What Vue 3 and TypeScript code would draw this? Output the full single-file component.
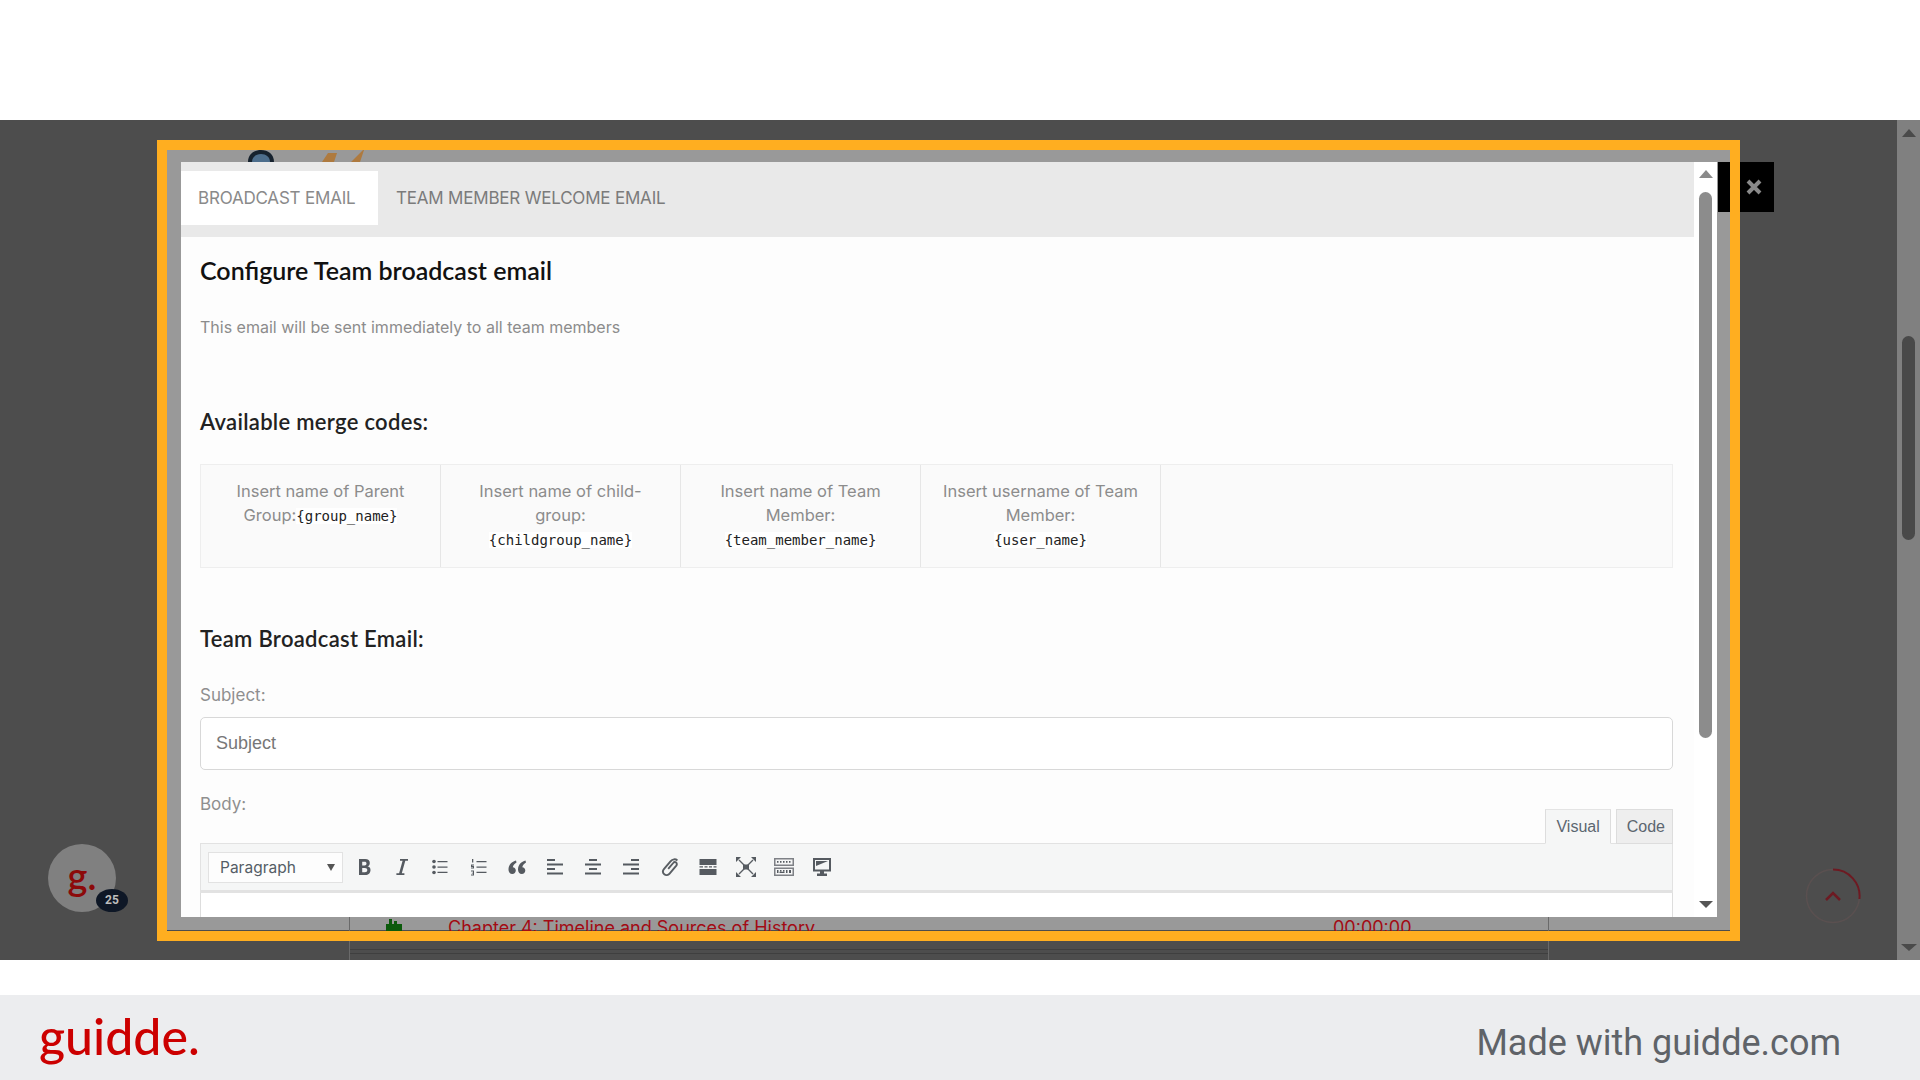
<script setup lang="ts">
const cells = [
  { label: 'Insert name of Parent Group:', code: '{group_name}', inline: true },
  { label: 'Insert name of child-group:', code: '{childgroup_name}', inline: false },
  { label: 'Insert name of Team Member:', code: '{team_member_name}', inline: false },
  { label: 'Insert username of Team Member:', code: '{user_name}', inline: false },
]
</script>

<template>
  <div class="page">
    <div class="top-space"></div>
    <main class="stage">
      <div class="outer-scroll">
        <span class="arrow up dark"></span>
        <span class="outer-thumb"></span>
        <span class="arrow down dark"></span>
      </div>

      <div class="back-rows">
        <div class="back-row">
          <svg class="lock" width="18" height="16" viewBox="0 0 18 16"><path fill="#0b5a0b" d="M4 0h3v5h2V2h3v3h5v11H1V5h3z"/></svg>
          <span class="chapter">Chapter 4: Timeline and Sources of History</span>
          <span class="time">00:00:00</span>
        </div>
        <div class="back-line"></div>
        <div class="back-line second"></div>
      </div>

      <div class="avatar">
        <span class="avatar-g">g.</span>
        <span class="badge">25</span>
      </div>

      <svg class="to-top" width="56" height="56" viewBox="0 0 56 56">
        <circle cx="28" cy="28" r="26.5" fill="none" stroke="#5a5050" stroke-width="1.5"/>
        <path d="M28 1.5A26.5 26.5 0 0 1 54.4 31" fill="none" stroke="#6d1a22" stroke-width="2"/>
        <path d="M21 32l7-7 7 7" fill="none" stroke="#6d1a22" stroke-width="2.5"/>
      </svg>

      <div class="frame-fill">
        <svg class="behind-logo" width="130" height="12" viewBox="0 0 130 12">
          <path fill="#16222e" d="M1 12C1 4 7 0 14 0s13 4 13 12z"/>
          <path fill="#4d6e8c" d="M5 12c0-5 4-8 9-8s9 3 9 8z"/>
          <path fill="#ae7a3f" d="M75 12l6-9h9l-3 9zM104 12l12-12h1l-4 12z"/>
        </svg>
      </div>

      <button class="close" type="button" aria-label="Close">
        <svg width="16" height="16" viewBox="0 0 16 16"><path d="M2 2l12 12M14 2L2 14" stroke="#8a8a8a" stroke-width="4"/></svg>
      </button>

      <section class="modal">
        <div class="modal-main">
          <nav class="tabs">
            <span class="tab active">BROADCAST EMAIL</span>
            <span class="tab">TEAM MEMBER WELCOME EMAIL</span>
          </nav>
          <div class="content">
            <h2 class="title">Configure Team broadcast email</h2>
            <p class="desc">This email will be sent immediately to all team members</p>
            <h3 class="heading merge">Available merge codes:</h3>
            <div class="codes">
              <div v-for="c in cells" :key="c.code" class="cell">
                {{ c.label }}<br v-if="!c.inline" /><code>{{ c.code }}</code>
              </div>
            </div>
            <h3 class="heading team">Team Broadcast Email:</h3>
            <label class="field-label subject-label">Subject:</label>
            <div class="input">Subject</div>
            <div class="body-row">
              <label class="field-label">Body:</label>
              <div class="editor-tabs">
                <span class="etab on">Visual</span>
                <span class="etab">Code</span>
              </div>
            </div>
            <div class="toolbar">
              <div class="select"><span>Paragraph</span><i class="caret"></i></div>
              <span class="btn"><svg viewBox="0 0 20 20"><path fill-rule="evenodd" d="M5 2h6.2c3 0 4.6 1.4 4.6 3.9 0 1.7-.9 2.9-2.3 3.4 1.9.4 3 1.7 3 3.7 0 3-2.100 5-5.200 5H5zm3.200 2.700v3.700h2.300c1.300 0 2-.7 2-1.900s-.7-1.800-2-1.800zm0 6.200v4.400h2.700c1.500 0 2.400-.8 2.400-2.200s-.9-2.200-2.400-2.200z"/></svg></span>
              <span class="btn"><svg viewBox="0 0 20 20"><path d="M8 2h8v1.800h-2.700L9.800 16.200h2.600V18h-8v-1.800h2.700L10.600 3.800H8z"/></svg></span>
              <span class="btn"><svg viewBox="0 0 20 20"><circle cx="4" cy="4.500" r="1.800"/><circle cx="4" cy="10" r="1.800"/><circle cx="4" cy="15.500" r="1.800"/><path d="M7.500 4h10v1.300h-10zM7.500 9.400h10v1.300h-10zM7.500 14.800h10v1.300h-10z"/></svg></span>
              <span class="btn"><svg viewBox="0 0 20 20"><path d="M3 2h1.300v3.500H3zM2 7.500h3v1H3.200v.6H5v2.400H2v-1h2v-.5H2zM2 13.500h3v5H2v-1h2v-1H2.800v-.8H4v-1.200H2zM7.500 4h10v1.300h-10zM7.500 9.400h10v1.300h-10zM7.500 14.800h10v1.300h-10z"/></svg></span>
              <span class="btn"><svg viewBox="0 0 20 20"><path d="M9 3.500C5 4.500 1.500 7.500 1.500 12.500c0 2.500 1.500 4.500 3.800 4.500 2 0 3.500-1.500 3.500-3.400 0-1.800-1.300-3.200-3-3.300.4-2 1.800-3.500 3.700-4.700zM18.500 3.500c-4 1-7.500 4-7.500 9 0 2.500 1.500 4.500 3.800 4.500 2 0 3.500-1.500 3.500-3.400 0-1.800-1.300-3.200-3-3.300.4-2 1.800-3.500 3.700-4.700z"/></svg></span>
              <span class="btn"><svg viewBox="0 0 20 20"><path d="M2 2h8v2H2zM2 6.500h16v2H2zM2 11h8v2H2zM2 15.500h16v2H2z"/></svg></span>
              <span class="btn"><svg viewBox="0 0 20 20"><path d="M6 2h8v2H6zM2 6.500h16v2H2zM6 11h8v2H6zM2 15.500h16v2H2z"/></svg></span>
              <span class="btn"><svg viewBox="0 0 20 20"><path d="M10 2h8v2h-8zM2 6.500h16v2H2zM10 11h8v2h-8zM2 15.500h16v2H2z"/></svg></span>
              <span class="btn"><svg viewBox="0 0 20 20"><path fill="none" stroke-width="1.900" d="M8.200 11.800l5-5.800c.8-1 2-1.100 2.900-.4s1 2 .2 3l-6.700 8c-1.500 1.800-3.800 2-5.300.7s-1.700-3.600-.2-5.400l6.400-7.600c2-2.400 5-2.500 6.900-.9" stroke="#595e63"/></svg></span>
              <span class="btn"><svg viewBox="0 0 20 20"><path d="M1.500 2h17v6h-17zM1.500 12h17v6h-17zM1.500 9.200h3.500v1.400H1.500zM6.500 9.200h3v1.400h-3zM11 9.200h3v1.400h-3zM15.500 9.200h3v1.400h-3z"/></svg></span>
              <span class="btn"><svg viewBox="0 0 20 20"><rect x="7" y="7.500" width="6" height="5"/><path fill="none" stroke="#595e63" stroke-width="1.400" d="M3 3l14 14M17 3L3 17"/><path d="M0 0h5l-5 5zM20 0h-5l5 5zM0 20h5l-5-5zM20 20h-5l5-5z"/></svg></span>
              <span class="btn"><svg viewBox="0 0 20 20"><path fill-rule="evenodd" opacity=".75" d="M0 1h20v8H0zM1.500 2.500v5h17v-5zM0 10.500h20V19H0zM1.500 12v5.500h17V12z"/><path d="M3 4h1.500v1.800H3zM6 4h1.500v1.800H6zM9 4h1.500v1.800H9zM12 4h1.500v1.800H12zM15 4h1.500v1.800H15zM3 13h1.500v3H3zM5.500 14.800h5V16h-5zM6 13h1.500v1.500H6zM9 13h1.500v1.500H9zM12 13h1.500v3H12zM15 13h2v3h-2z"/></svg></span>
              <span class="btn"><svg viewBox="0 0 20 20"><path fill-rule="evenodd" d="M1 1h18v13.500h-7v2h3V19H5v-2.500h3v-2H1zM3 3v9.500h14V3z"/><path d="M4 4h12L4 9z"/></svg></span>
            </div>
            <div class="editor-area"></div>
          </div>
        </div>
        <div class="modal-scroll">
          <span class="arrow up"></span>
          <span class="thumb"></span>
          <span class="arrow down"></span>
        </div>
      </section>

      <div class="highlight"></div>
    </main>
    <div class="gap"></div>
    <footer class="footer">
      <span class="logo">guidde.</span>
      <span class="made">Made with guidde.com</span>
    </footer>
  </div>
</template>

<style>
html, body { margin: 0; background: #fff; overflow: hidden; }
</style>

<style scoped>
.page { width: 1920px; height: 1080px; display: flex; flex-direction: column; font-family: Inter, "Liberation Sans", sans-serif; }
.top-space { height: 120px; flex: none; }
.gap { height: 35px; flex: none; }
.stage { position: relative; height: 840px; flex: none; background: #4d4d4d; display: flex; justify-content: flex-end; overflow: hidden; }
.outer-scroll { width: 23px; height: 840px; background: #808080; display: flex; flex-direction: column; align-items: center; }
.arrow { display: block; width: 0; height: 0; border-left: 7px solid transparent; border-right: 7px solid transparent; flex: none; }
.arrow.up { border-bottom: 8px solid #8a8a8a; }
.arrow.down { border-top: 7px solid #555; }
.arrow.dark.up { border-bottom-color: #4a4a4a; margin-top: 9px; }
.arrow.dark.down { border-top-color: #4a4a4a; margin-top: auto; margin-bottom: 9px; border-left-width: 8px; border-right-width: 8px; }
.outer-thumb { width: 13px; height: 204px; background: #494949; border-radius: 7px; margin-top: 199px; }

.back-rows { position: absolute; left: 349px; top: 790px; width: 1200px; height: 50px; border-left: 1px solid #6a6a6a; border-right: 1px solid #6a6a6a; box-sizing: border-box; z-index: 1; }
.back-row { height: 30px; display: flex; align-items: center; padding: 0 0 0 35px; }
.lock { margin-right: 45px; margin-top: 4px; }
.chapter { width: 885px; color: #a30b14; font-size: 18px; white-space: nowrap; margin-top: 4px; }
.time { color: #a30b14; font-size: 18px; margin-top: 4px; }
.back-line { height: 1px; margin-top: 9px; background: #3f3f3f; }
.back-line.second { margin-top: 3px; }

.avatar { position: absolute; left: 48px; top: 724px; width: 68px; height: 68px; border-radius: 50%; background: #808080; display: flex; align-items: center; justify-content: center; z-index: 2; }
.avatar-g { color: #8c0a0a; font-family: Lato, sans-serif; font-size: 38px; font-weight: 600; line-height: 1; margin-top: -6px; }
.badge { position: absolute; left: 48px; top: 45px; width: 32px; height: 23px; border-radius: 50%; background: #0e1726; color: #bdbdbd; font: 700 12px/23px "Roboto", sans-serif; text-align: center; }
.to-top { position: absolute; left: 1805px; top: 748px; }

.frame-fill { position: absolute; left: 167px; top: 30px; width: 1563px; height: 780px; background: #999; z-index: 0; }
.back-rows { background: transparent; }
.behind-logo { position: absolute; left: 80px; top: 0; }
.close { position: absolute; left: 1718px; top: 42px; width: 56px; height: 50px; background: #000; border: 0; padding: 0; display: flex; align-items: center; justify-content: center; z-index: 3; }
.close svg { margin-left: 16px; }

.modal { position: absolute; left: 181px; top: 42px; width: 1536px; height: 755px; background: #fff; display: flex; overflow: hidden; z-index: 3; }
.modal-main { width: 1513px; flex: none; background: #fdfdfd; }
.modal-scroll { width: 23px; flex: none; display: flex; flex-direction: column; align-items: center; background: #fff; height: 755px; }
.modal-scroll .arrow.up { margin-top: 8px; }
.thumb { width: 13px; height: 546px; background: #8c8c8c; border-radius: 7px; margin-top: 14px; }
.modal-scroll .arrow.down { margin-top: auto; margin-bottom: 9px; }

.tabs { height: 75px; background: #e9e9e9; padding-top: 9px; box-sizing: border-box; display: flex; align-items: flex-start; }
.tab { height: 54px; line-height: 54px; padding: 0 18px; color: #7b7b7b; font-size: 17px; white-space: nowrap; box-sizing: border-box; letter-spacing: -0.2px; }
.tab.active { background: #fff; color: #8a8a8a; width: 197px; padding: 0 17px; }
.content { padding: 0 21px 0 19px; }
.title { margin: 18px 0 0; font: 600 25px/30px Lato, sans-serif; color: #111; }
.desc { margin: 30px 0 0; font-size: 16px; line-height: 24px; color: #8c8c8c; }
.heading { font: 600 22px/30px Lato, sans-serif; color: #222; letter-spacing: .3px; }
.merge { margin: 68px 0 0; }
.team { margin: 56px 0 0; }
.codes { margin-top: 27px; height: 104px; background: #fafafa; border: 1px solid #eee; box-sizing: border-box; display: flex; }
.cell { width: 240px; box-sizing: border-box; border-right: 1px solid #e6e6e6; padding: 14px 20px 0; text-align: center; font-size: 16.500px; line-height: 24px; color: #8c8c8c; }
.cell code { font-family: "DejaVu Sans Mono", monospace; font-size: 14px; color: #222; background: #fff; }
.field-label { display: block; font-size: 17px; line-height: 24px; color: #8f8f8f; }
.subject-label { margin-top: 29px; }
.input { margin-top: 10px; height: 53px; box-sizing: border-box; border: 1px solid #d8d8d8; border-radius: 5px; background: #fff; padding-left: 15px; font: 18px/51px "Liberation Sans", sans-serif; color: #777; }
.body-row { margin-top: 22px; height: 51px; display: flex; justify-content: space-between; position: relative; }
.editor-tabs { display: flex; gap: 5px; align-self: flex-end; margin-bottom: -1px; position: relative; z-index: 1; }
.etab { height: 35px; box-sizing: border-box; padding: 0 7px 0 10px; border: 1px solid #ddd; background: #eee; font: 16px/33px "Liberation Sans", sans-serif; color: #5c6670; }
.etab.on { background: #f5f6f6; border-bottom-color: #f5f6f6; border-top-color: #e4e4e4; padding: 0 10px; }
.toolbar { height: 50px; box-sizing: border-box; background: #f5f6f6; border: 1px solid #e2e2e2; border-width: 1px 1px 3px; display: flex; align-items: center; padding-left: 7px; }
.select { width: 135px; height: 31px; box-sizing: border-box; border: 1px solid #e2e2e2; background: #fdfdfd; display: flex; align-items: center; justify-content: space-between; padding: 0 7px 0 11px; font-size: 15.500px; color: #555d66; margin-right: 2px; }
.caret { width: 0; height: 0; border-left: 4px solid transparent; border-right: 4px solid transparent; border-top: 7px solid #555; }
.btn { width: 38.200px; height: 24px; display: flex; align-items: center; justify-content: center; flex: none; }
.btn svg { width: 20px; height: 20px; fill: #555a60; }
.editor-area { height: 40px; border-left: 1px solid #ddd; border-right: 1px solid #ddd; background: #fff; }

.highlight { position: absolute; left: 157px; top: 20px; width: 1583px; height: 801px; box-sizing: border-box; border: 10px solid #ffae20; z-index: 4; }

.footer { height: 85px; flex: none; background: #ecedef; display: flex; align-items: center; justify-content: space-between; box-sizing: border-box; padding: 0 79px 0 39px; }
.logo { color: #cc0000; font: 500 50px/1 Lato, sans-serif; margin-top: -4px; }
.made { color: #5f6368; font: 36px/1 Roboto, sans-serif; margin-top: 10px; }
</style>
